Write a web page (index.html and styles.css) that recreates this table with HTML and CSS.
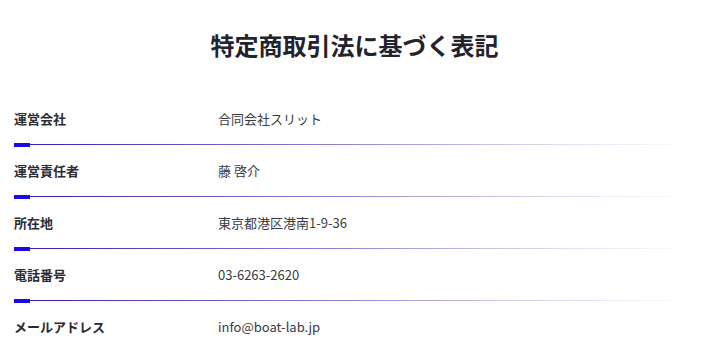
FILE: index.html
```html
<!DOCTYPE html>
<html lang="ja">
<head>
    <meta charset="UTF-8">
    <meta name="viewport" content="width=device-width, initial-scale=1.0">
    <title>特定商取引法に基づく表記</title>
    <link rel="stylesheet" href="styles.css">
</head>
<body>
<section class="legal">
    <h1 class="legal-title">特定商取引法に基づく表記</h1>

    <dl class="legal-list">
        <div class="legal-row">
            <dt>運営会社</dt>
            <dd>合同会社スリット</dd>
        </div>
        <div class="legal-row">
            <dt>運営責任者</dt>
            <dd>藤 啓介</dd>
        </div>
        <div class="legal-row">
            <dt>所在地</dt>
            <dd>東京都港区港南1-9-36</dd>
        </div>
        <div class="legal-row">
            <dt>電話番号</dt>
            <dd>03-6263-2620</dd>
        </div>
        <div class="legal-row">
            <dt>メールアドレス</dt>
            <dd>info@boat-lab.jp</dd>
        </div>
    </dl>
</section>
</body>
</html>
```

FILE: styles.css
```css
:root {
    --text: #2b2b33;
    --accent: #1a0ae6;
    --line: #3418b8;
}

* {
    margin: 0;
    padding: 0;
    box-sizing: border-box;
}

body {
    font-family: "Noto Sans CJK JP", "Noto Sans", sans-serif;
    color: var(--text);
    background-color: #fff;
}

.legal {
    padding: 0 14px;
}

.legal-title {
    padding-top: 28px;
    margin-bottom: 31px;
    font-size: 24px;
    line-height: 34px;
    font-weight: 700;
    text-align: center;
    color: #23232d;
}

.legal-list {
    width: 662px;
}

.legal-row {
    display: flex;
    position: relative;
    padding: 16px 0 16px;
    font-size: 13px;
    line-height: 20px;
}

/* thin fading rule under each row */
.legal-row::after {
    content: "";
    position: absolute;
    left: 0;
    right: 0;
    bottom: 0;
    height: 1px;
    background: linear-gradient(to right, var(--line) 0%, rgba(128, 110, 200, 0.85) 50%, rgba(170, 155, 220, 0.3) 85%, rgba(200, 190, 235, 0.1) 100%);
}

/* short thick marker at the start of the rule */
.legal-row::before {
    content: "";
    position: absolute;
    left: 0;
    bottom: -2px;
    width: 16px;
    height: 4px;
    background-color: var(--accent);
    z-index: 1;
}

.legal-row dt {
    width: 204px;
    flex-shrink: 0;
    font-weight: 700;
}

.legal-row dd {
    flex: 1;
    color: #3a3a42;
}
```
